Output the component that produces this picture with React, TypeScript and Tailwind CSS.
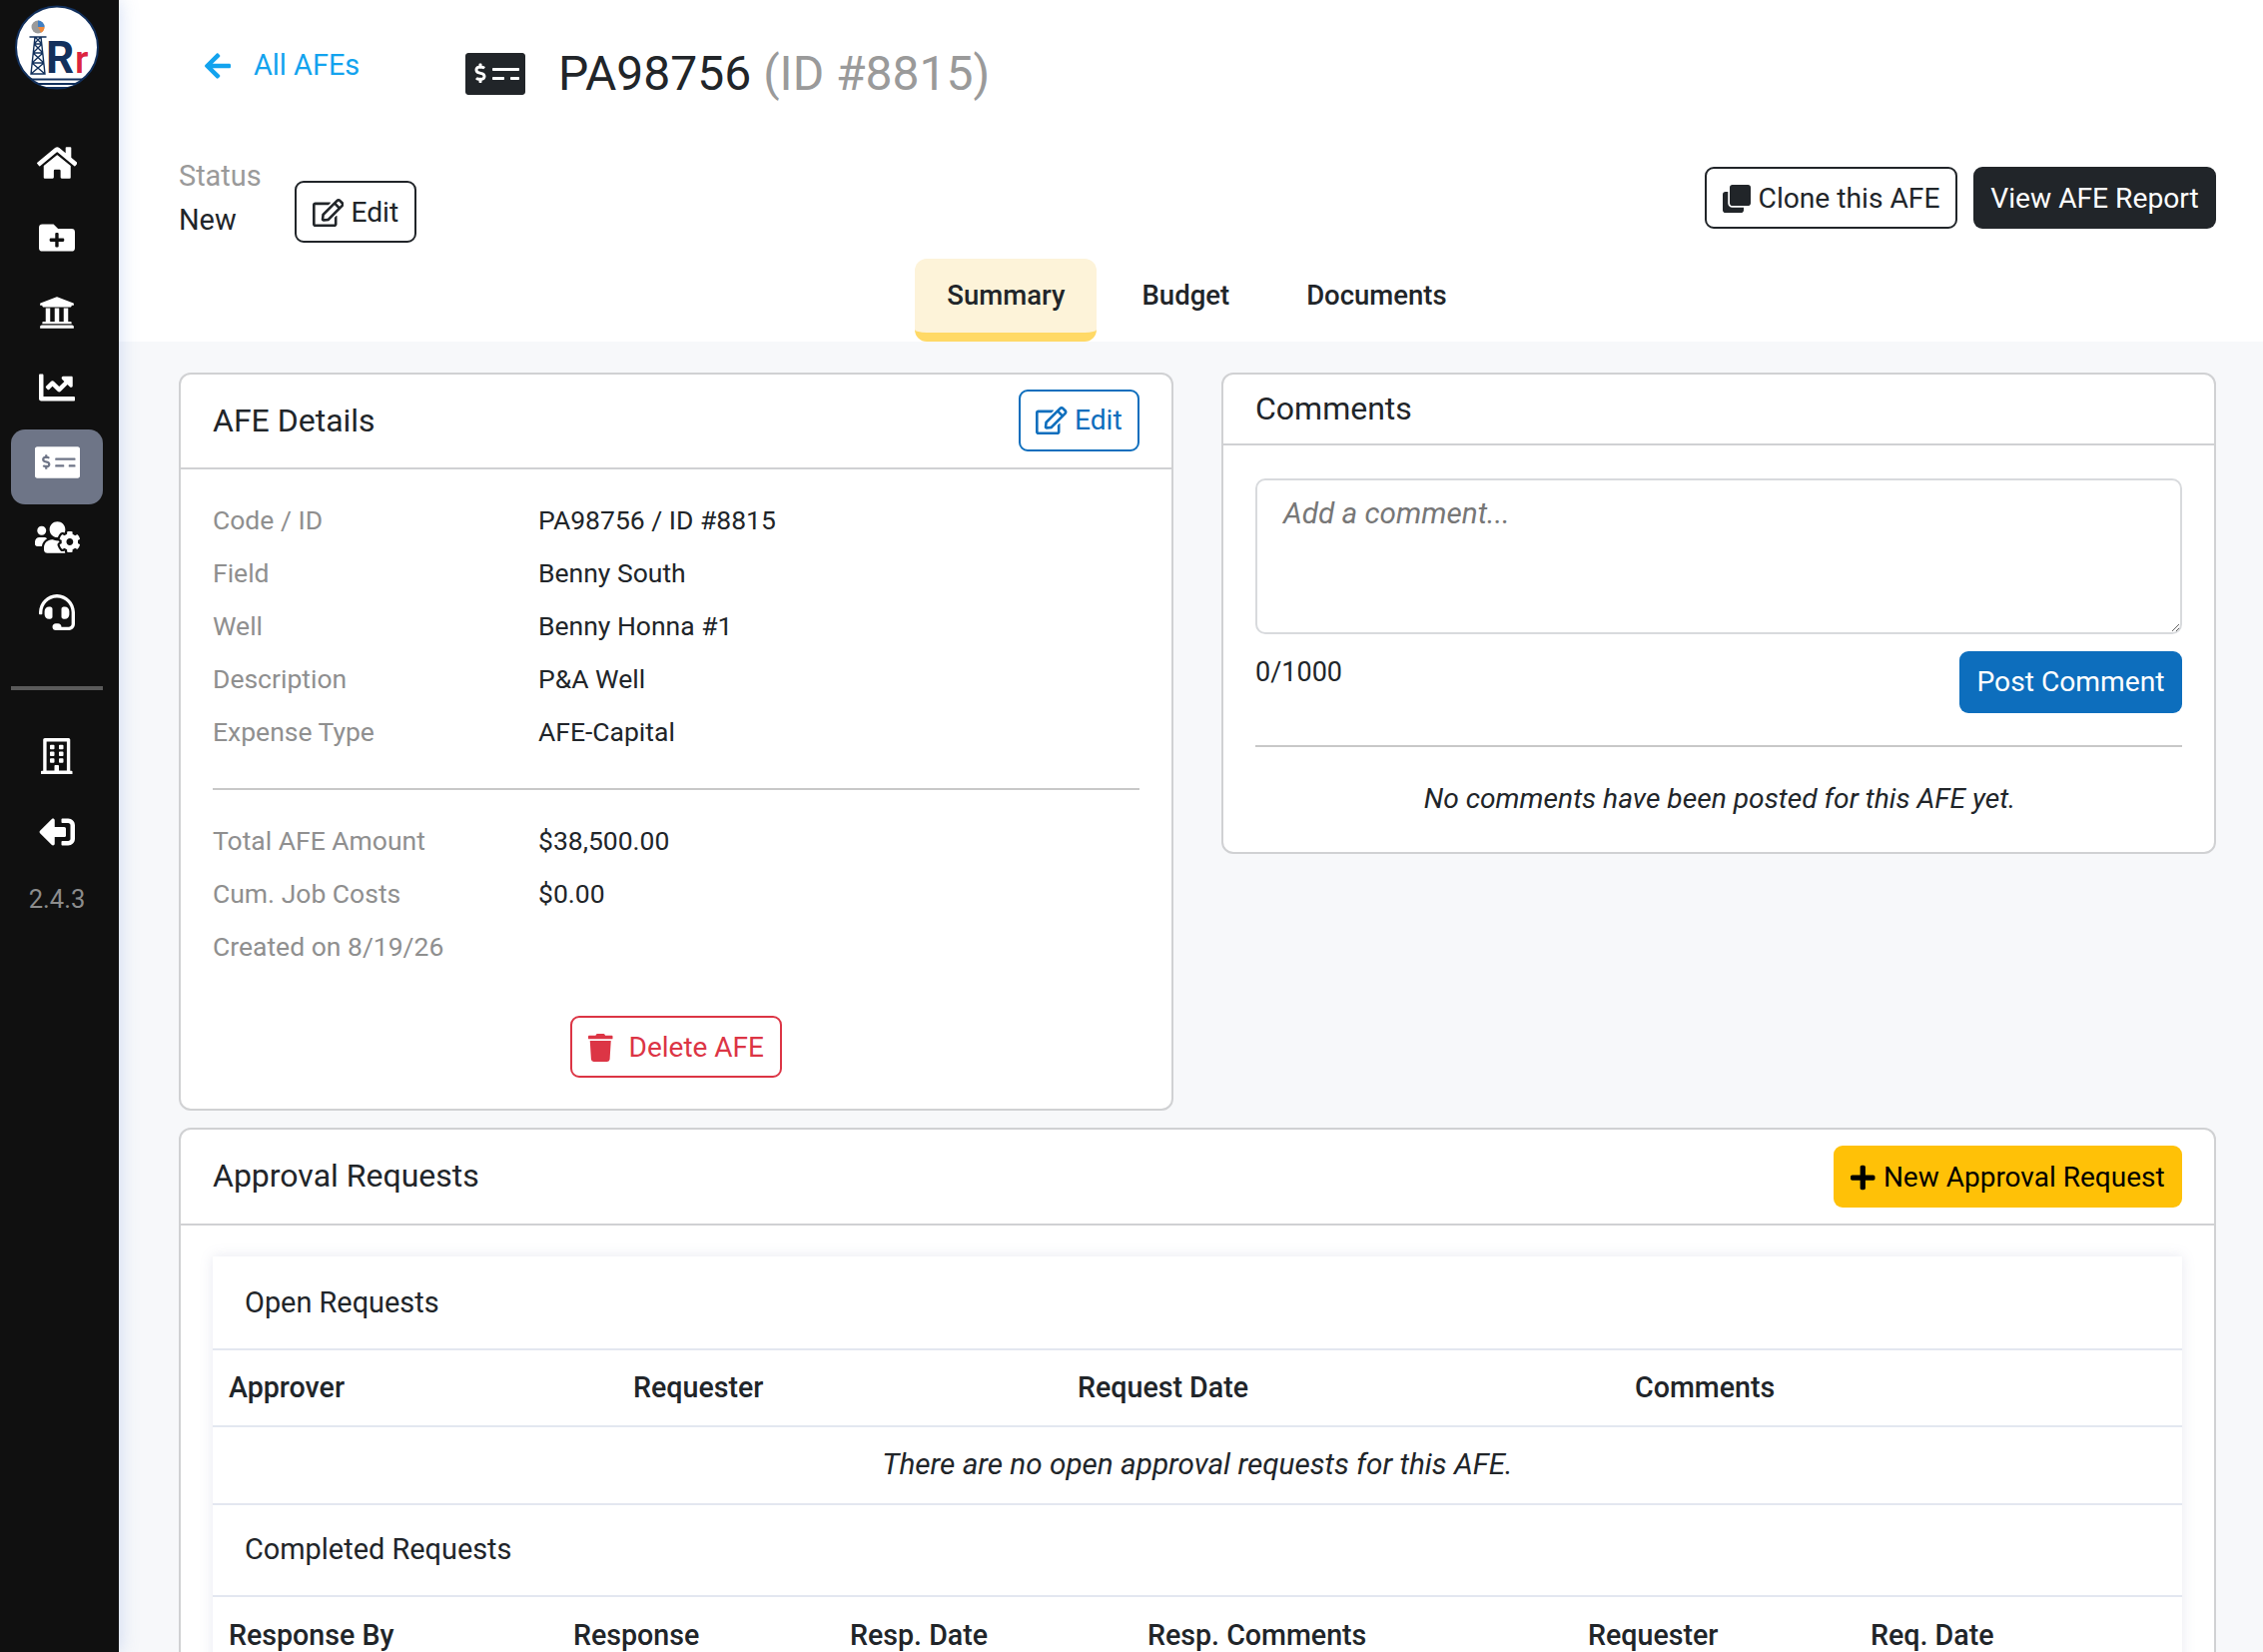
import { FaArrowLeft, FaChartLine, FaClone, FaFolderPlus, FaHeadset, FaHome, FaMoneyCheckAlt, FaPlus, FaRegBuilding, FaRegEdit, FaSignOutAlt, FaTrash, FaUniversity, FaUsersCog } from 'react-icons/fa';

function Logo() {
  return (
    <svg width="84" height="85" viewBox="0 0 84 85" className="block">
      <defs>
        <clipPath id="logo-clip">
          <circle cx="42" cy="42.5" r="41" />
        </clipPath>
      </defs>
      <circle cx="42" cy="42.5" r="41" fill="#fff" stroke="#12305c" strokeWidth="2" />
      <g clipPath="url(#logo-clip)">
        <rect x="0" y="73.5" width="84" height="2" fill="#12305c" />
        <rect x="0" y="78" width="84" height="7" fill="#12305c" />
        <rect x="20" y="80" width="44" height="2" fill="#fff" />
      </g>
      <circle cx="23" cy="22" r="6.5" fill="#9a9a9a" />
      <path d="M23 15.5a6.5 6.5 0 0 1 6.5 6.5H23z" fill="#3f7fc4" />
      <path d="M29.5 22a6.5 6.5 0 0 1-3.5 5.8L23 22z" fill="#ef8a3c" />
      <path d="M20 32h6l4 37h-14zM19 39h8M18 48h10M17 58h12M20 32l7 7M26 32l-7 7M19 39l9 9M27 39l-9 9M18 48l11 10M28 48l-11 10M17 58l13 11M29 58l-13 11M14.5 32h17" fill="none" stroke="#12305c" strokeWidth="1.4" />
      <text x="31" y="68" fontSize="44" fontWeight="700" fill="#12305c" fontFamily="Roboto, sans-serif">R</text>
      <text x="60" y="68" fontSize="38" fontWeight="500" fill="#dc2440" fontFamily="Roboto, sans-serif">r</text>
    </svg>
  );
}

function NavItem({ children, active }: { children: React.ReactNode; active?: boolean }) {
  return (
    <div className={active ? 'flex h-[75px] w-[92px] justify-center rounded-[14px] bg-[#6e7587] pt-[15px] text-white' : 'flex h-[75px] w-[92px] justify-center pt-[15px] text-white'}>
      {children}
    </div>
  );
}

function Sidebar() {
  return (
    <aside className="z-10 flex h-full w-[119px] shrink-0 flex-col items-start bg-[#101010] pl-[11px] shadow-[0_0_18px_rgba(100,140,220,0.3)]">
      <div className="mb-[40px] ml-[4px] mt-[5px]">
        <Logo />
      </div>
      <NavItem><FaHome className="h-[36px] w-[40.5px]" /></NavItem>
      <NavItem><FaFolderPlus className="h-[36px] w-[36px]" /></NavItem>
      <NavItem><FaUniversity className="h-[36px] w-[36px]" /></NavItem>
      <NavItem><FaChartLine className="h-[36px] w-[36px]" /></NavItem>
      <NavItem active><FaMoneyCheckAlt className="h-[36px] w-[45px]" /></NavItem>
      <NavItem><FaUsersCog className="h-[36px] w-[45px]" /></NavItem>
      <NavItem><FaHeadset className="h-[36px] w-[36px]" /></NavItem>
      <div className="mb-[33px] mt-[32px] h-[4px] w-[92px] bg-[#5a5a5a]" />
      <NavItem><FaRegBuilding className="h-[36px] w-[31.5px]" /></NavItem>
      <div className="mt-px">
        <NavItem><FaSignOutAlt className="h-[36px] w-[36px] -scale-x-100" /></NavItem>
      </div>
      <div className="w-[92px] text-center text-[25.5px] leading-[50px] text-[#8c8c8c]">2.4.3</div>
    </aside>
  );
}

function Header() {
  return (
    <header className="h-[342px] bg-white">
      <div className="flex h-[154px] items-start pl-[86px]">
        <a className="mt-[46px] flex h-[40px] w-[155px] items-center gap-[23px] whitespace-nowrap text-[28.9px] text-[#13a3ee]">
          <FaArrowLeft className="h-[30px] w-[26px] shrink-0" />
          <span>All AFEs</span>
        </a>
        <div className="ml-[106px] mt-[44px] flex h-[60px] items-center gap-[33px]">
          <FaMoneyCheckAlt className="h-[48px] w-[60px] text-[#212529]" />
          <h1 className="text-[48px] font-normal">
            PA98756 <span className="text-[#9a9a9a]">(ID #8815)</span>
          </h1>
        </div>
      </div>
      <div className="flex h-[105px] items-start justify-between pl-[60px] pr-[47px]">
        <div className="flex items-start">
          <div className="w-[116px] text-[28.9px] leading-[44px]">
            <div className="text-[#9a9a9a]">Status</div>
            <div>New</div>
          </div>
          <button className="mt-[27px] flex h-[62px] w-[122px] items-center justify-center gap-[7px] rounded-[9px] border-2 border-[#212529] pt-[2px] text-[28.2px]">
            <FaRegEdit className="h-[28px] w-[31.5px]" />
            Edit
          </button>
        </div>
        <div className="mt-[13px] flex gap-[16px]">
          <button className="flex h-[62px] w-[253px] items-center justify-center gap-[8px] rounded-[9px] border-2 border-[#212529] pt-[2px] text-[28.2px]">
            <FaClone className="h-[28px] w-[28px]" />
            Clone this AFE
          </button>
          <button className="h-[62px] w-[243px] rounded-[9px] bg-[#212529] pt-[2px] text-[28.2px] text-white">View AFE Report</button>
        </div>
      </div>
      <nav className="flex h-[83px] justify-center gap-[13px] pl-[12px] text-[27.5px] font-medium">
        <div className="flex h-[83px] items-center rounded-[12px] border-b-[9px] border-[#ffd966] bg-[#fdf3d9] px-[32px]">Summary</div>
        <div className="flex h-[74px] items-center px-[32px]">Budget</div>
        <div className="flex h-[74px] items-center px-[32px]">Documents</div>
      </nav>
    </header>
  );
}

const details = [
  ['Code / ID', 'PA98756 / ID #8815'],
  ['Field', 'Benny South'],
  ['Well', 'Benny Honna #1'],
  ['Description', 'P&A Well'],
  ['Expense Type', 'AFE-Capital'],
];

function DetailRow({ label, value }: { label: string; value?: string }) {
  return (
    <div className="grid grid-cols-[326px_1fr] text-[26.5px] leading-[53px]">
      <div className="whitespace-nowrap text-[#8f8f8f]">{label}</div>
      <div>{value}</div>
    </div>
  );
}

function AfeDetails() {
  return (
    <section className="h-[739px] rounded-[12px] border-2 border-[#d0d1d3] bg-white">
      <div className="flex h-[95px] items-center justify-between border-b-2 border-[#d0d1d3] px-[32px] pb-[2px]">
        <h2 className="text-[32px] font-normal">AFE Details</h2>
        <button className="flex h-[62px] w-[121px] items-center justify-center gap-[7px] rounded-[9px] border-2 border-[#0d6ebd] pt-px text-[28.2px] text-[#0d6ebd]">
          <FaRegEdit className="h-[28px] w-[31.5px]" />
          Edit
        </button>
      </div>
      <div className="px-[32px] pt-[24px]">
        {details.map(([label, value]) => (
          <DetailRow key={label} label={label} value={value} />
        ))}
        <div className="mb-[24px] mt-[30px] h-[2px] bg-[#c8c8c8]" />
        <DetailRow label="Total AFE Amount" value="$38,500.00" />
        <DetailRow label="Cum. Job Costs" value="$0.00" />
        <DetailRow label="Created on 8/19/26" />
        <div className="mt-[43px] flex justify-center">
          <button className="flex h-[62px] w-[212px] items-center justify-center gap-[16px] rounded-[9px] border-2 border-[#dc3545] pt-px text-[28px] text-[#dc3545]">
            <FaTrash className="h-[28px] w-[24.5px]" />
            Delete AFE
          </button>
        </div>
      </div>
    </section>
  );
}

function Comments() {
  return (
    <section className="h-[482px] rounded-[12px] border-2 border-[#d0d1d3] bg-white">
      <div className="flex h-[71px] items-center border-b-2 border-[#d0d1d3] px-[32px] pb-[2px]">
        <h2 className="text-[32px] font-normal">Comments</h2>
      </div>
      <div className="px-[32px] pt-[33px]">
        <textarea
          placeholder="Add a comment..."
          className="block h-[156px] w-full rounded-[10px] border-2 border-[#d8dadd] px-[26px] py-[11px] text-[29.7px] placeholder:italic placeholder:text-[#777]"
        />
        <div className="mt-[17px] flex items-start justify-between">
          <span className="text-[27px] leading-[42px]">0/1000</span>
          <button className="h-[62px] w-[223px] rounded-[9px] bg-[#0d6ebd] text-[28.2px] text-white">Post Comment</button>
        </div>
        <div className="mt-[32px] h-[2px] bg-[#c8c8c8]" />
        <p className="flex h-[105px] items-center justify-center pl-[2px] text-[28.2px] italic">No comments have been posted for this AFE yet.</p>
      </div>
    </section>
  );
}

function Approvals() {
  return (
    <section className="rounded-[12px] border-2 border-[#d0d1d3] bg-white">
      <div className="flex h-[96px] items-center justify-between border-b-2 border-[#d0d1d3] px-[32px] pb-[2px]">
        <h2 className="text-[32px] font-normal">Approval Requests</h2>
        <button className="mt-[2px] flex h-[62px] w-[349px] items-center justify-center gap-[8px] rounded-[9px] bg-[#ffc107] pt-[2px] text-[28px] text-black">
          <FaPlus className="h-[28px] w-[24.5px]" />
          New Approval Request
        </button>
      </div>
      <div className="px-[32px] pt-[31px]">
        <div className="bg-white text-[28.9px] shadow-[0_0_12px_rgba(120,130,170,0.18)]">
          <div className="flex h-[94px] items-center border-b-2 border-[#e3e7f0] pl-[32px] pt-[2px]">Open Requests</div>
          <table className="w-full table-fixed border-collapse">
            <thead>
              <tr className="h-[76px] border-b-2 border-[#e3e7f0] text-left text-[28.6px]">
                <th className="w-[421px] pl-[16px] font-medium">Approver</th>
                <th className="w-[445px] font-medium">Requester</th>
                <th className="w-[558px] font-medium">Request Date</th>
                <th className="font-medium">Comments</th>
              </tr>
            </thead>
            <tbody>
              <tr className="h-[78px] border-b-2 border-[#e3e7f0]">
                <td colSpan={4} className="pb-[2px] text-center text-[29.7px] italic">There are no open approval requests for this AFE.</td>
              </tr>
            </tbody>
          </table>
          <div className="flex h-[92px] items-center border-b-2 border-[#e3e7f0] pl-[32px]">Completed Requests</div>
          <table className="w-full table-fixed border-collapse">
            <thead>
              <tr className="h-[77px] text-left text-[28.6px]">
                <th className="w-[361px] pl-[16px] font-medium">Response By</th>
                <th className="w-[277px] font-medium">Response</th>
                <th className="w-[298px] font-medium">Resp. Date</th>
                <th className="w-[441px] font-medium">Resp. Comments</th>
                <th className="w-[283px] font-medium">Requester</th>
                <th className="font-medium">Req. Date</th>
              </tr>
            </thead>
          </table>
        </div>
      </div>
    </section>
  );
}

export default function App() {
  return (
    <div className="flex h-[1654px] w-[2266px] overflow-hidden bg-[#f7f8fa] font-[Roboto,sans-serif] text-[#212529]">
      <Sidebar />
      <main className="flex-1">
        <Header />
        <div className="pl-[60px] pr-[47px] pt-[31px]">
          <div className="grid grid-cols-2 items-start gap-x-[48px]">
            <AfeDetails />
            <Comments />
          </div>
          <div className="mt-[17px]">
            <Approvals />
          </div>
        </div>
      </main>
    </div>
  );
}
